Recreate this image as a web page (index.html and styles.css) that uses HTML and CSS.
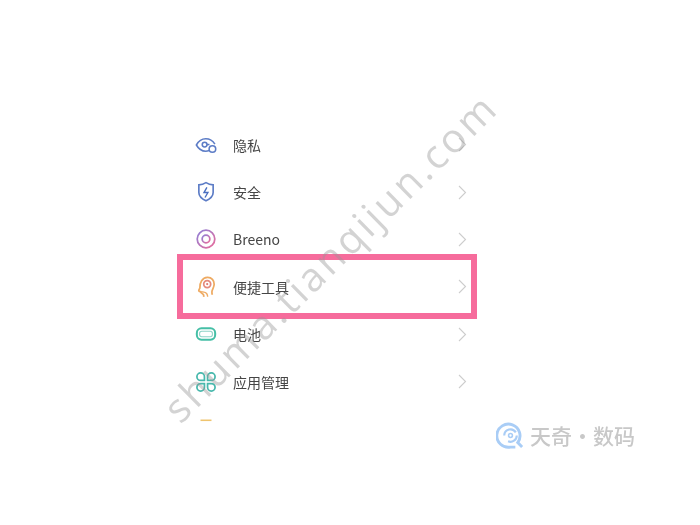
FILE: index.html
```html
<!DOCTYPE html>
<html lang="zh">
<head>
<meta charset="utf-8">
<title>设置</title>
<link rel="stylesheet" href="styles.css">
</head>
<body>
<main class="page">
  <ul class="list">
    <li class="row">
      <svg class="icon" viewBox="0 0 24 24" fill="none" stroke="#5c7cc6" stroke-width="1.700"><path d="M15.500 18c-1.300.5-2.600.8-3.800.8C7.400 18.800 3.600 15.800 1.500 12 3.600 8.200 7.400 5.200 11.700 5.200c4.300 0 7.900 2.400 10 5.800"/><circle cx="10.500" cy="11.500" r="2.600"/><path d="M13 11.500h2.800"/><circle cx="19" cy="16.400" r="3.600"/></svg>
      <span class="label">隐私</span>
      <svg class="chev" viewBox="0 0 9 15" fill="none"><path d="M1 1l6.500 6.500L1 14"/></svg>
    </li>
    <li class="row">
      <svg class="icon" viewBox="0 0 24 24" fill="none" stroke="#5c7cc6" stroke-width="1.800"><path d="M12 1.800c2.400 1.500 5 2.300 7.800 2.400v8.400c0 4-3.200 6.900-7.800 9-4.600-2.100-7.800-5-7.800-9V4.200c2.800-.1 5.400-.9 7.800-2.400z"/><path d="M13 7l-3.200 5.600h4.300L10.900 18" stroke="#4a6fc0" stroke-width="1.500"/></svg>
      <span class="label">安全</span>
      <svg class="chev" viewBox="0 0 9 15" fill="none"><path d="M1 1l6.500 6.500L1 14"/></svg>
    </li>
    <li class="row">
      <svg class="icon" viewBox="0 0 24 24" fill="none"><defs><linearGradient id="breeno" x1="0" y1="0" x2="1" y2="1"><stop offset="0" stop-color="#8d7fd8"/><stop offset="1" stop-color="#ea6c9a"/></linearGradient></defs><circle cx="12" cy="12" r="9.600" stroke="url(#breeno)" stroke-width="1.900"/><circle cx="12" cy="12" r="4.200" stroke="url(#breeno)" stroke-width="1.900"/></svg>
      <span class="label">Breeno</span>
      <svg class="chev" viewBox="0 0 9 15" fill="none"><path d="M1 1l6.500 6.500L1 14"/></svg>
    </li>
    <li class="row">
      <svg class="icon" viewBox="0 0 24 24" fill="none" stroke="#eeaa62" stroke-width="1.900"><path d="M9.500 22.800c.3-1.500.1-2.500-1-3.200-1.400-.8-2.300-1.500-2.600-2.600-1.700.1-2.100-.9-1.500-2.100l.9-1.700C5 7 8 1.800 13.500 1.500c4.700-.2 7.500 3.300 7.400 7.500-.1 3.400-2 5.400-2.400 7.700-.2 1.500 0 2.600.4 3.800"/><path d="M6 17c3 .6 5.500-.2 6.800 2.200.6 1.200 1 2.300 1 3.400" stroke-width="1.500"/><circle cx="13.300" cy="8.800" r="3.800" stroke="#e58a7c"/><circle cx="13.300" cy="8.800" r="1.200" fill="#e0766e" stroke="none"/></svg>
      <span class="label">便捷工具</span>
      <svg class="chev" viewBox="0 0 9 15" fill="none"><path d="M1 1l6.500 6.500L1 14"/></svg>
    </li>
    <li class="row">
      <svg class="icon" viewBox="0 0 24 24" fill="none" stroke="#45bfa6"><rect x="2" y="5.800" width="20" height="12.400" rx="5" stroke-width="2.200"/><rect x="5" y="9" width="14" height="6" rx="2.400" stroke-width="1.200" stroke="#8fd4c8"/></svg>
      <span class="label">电池</span>
      <svg class="chev" viewBox="0 0 9 15" fill="none"><path d="M1 1l6.500 6.500L1 14"/></svg>
    </li>
    <li class="row">
      <svg class="icon" viewBox="0 0 24 24" fill="none" stroke="#47b8ac" stroke-width="1.900"><path d="M10.300 10.300H6.200A4.100 4.100 0 1 1 10.300 6.200zM13.700 10.300h4.100A4.100 4.100 0 1 0 13.700 6.200zM10.300 13.700H6.200A4.100 4.100 0 1 0 10.300 17.800zM13.700 13.700h4.100A4.100 4.100 0 1 1 13.700 17.800z"/></svg>
      <span class="label">应用管理</span>
      <svg class="chev" viewBox="0 0 9 15" fill="none"><path d="M1 1l6.500 6.500L1 14"/></svg>
    </li>
    <li class="row">
      <svg class="icon" viewBox="0 0 24 24" fill="none" stroke="#efc46e" stroke-width="1.700"><path d="M6 2.500h12"/></svg>
    </li>
  </ul>

  <div class="highlight"></div>
  <div class="watermark">shuma.tianqijun.com</div>

  <div class="brand">
    <svg class="brand-icon" viewBox="0 0 30 30" fill="none" stroke="#a9cdf6" stroke-width="3"><path d="M27 27l-4.500-4.700A12 12 0 1 0 15 27h5"/><path d="M8.500 15a6.500 6.500 0 0 1 12-3.300M21.500 15a6.500 6.500 0 0 1-9 6" stroke-width="2.200"/><circle cx="15" cy="15" r="2" stroke-width="1.600"/></svg>
    <span class="brand-text">天奇·数码</span>
  </div>
</main>
</body>
</html>
```
FILE: styles.css
```css
* { box-sizing: border-box; }
html, body { margin: 0; padding: 0; background: #fff; }
body { font-family: "Noto Sans CJK SC", "Noto Sans", sans-serif; }
.page {
  position: relative;
  width: 700px;
  height: 525px;
  overflow: hidden;
  padding: 121px 0 0 195px;
  filter: blur(0.6px);
}
.list {
  list-style: none;
  margin: 0;
  padding: 0;
  width: 274px;
  height: 301px;
  overflow: hidden;
}
.row {
  display: flex;
  align-items: center;
  height: 47.4px;
  gap: 16px;
  padding-right: 2px;
}
.icon { width: 22px; height: 22px; flex: none; }
.label { flex: 1; font-size: 14px; line-height: 20px; color: #454545; }
.chev { width: 9px; height: 15px; flex: none; stroke: #cdcdcd; stroke-width: 1.100; }
.highlight {
  position: absolute;
  left: 177px;
  top: 254px;
  width: 300px;
  height: 65px;
  border: 6px solid #f66c9c;
}
.watermark {
  position: absolute;
  left: 90px;
  top: 235px;
  width: 480px;
  text-align: center;
  transform: rotate(-44.500deg);
  font-family: "Open Sans", sans-serif;
  font-size: 40px;
  line-height: 44px;
  letter-spacing: 2.900px;
  white-space: nowrap;
  color: rgba(150, 150, 150, 0.42);
}
.brand {
  position: absolute;
  left: 496px;
  top: 421px;
  display: flex;
  align-items: center;
  gap: 5px;
}
.brand-icon { width: 29px; height: 29px; flex: none; }
.brand-text {
  font-size: 21px;
  line-height: 29px;
  font-weight: 500;
  color: #c8c8c8;
  white-space: nowrap;
}
```
